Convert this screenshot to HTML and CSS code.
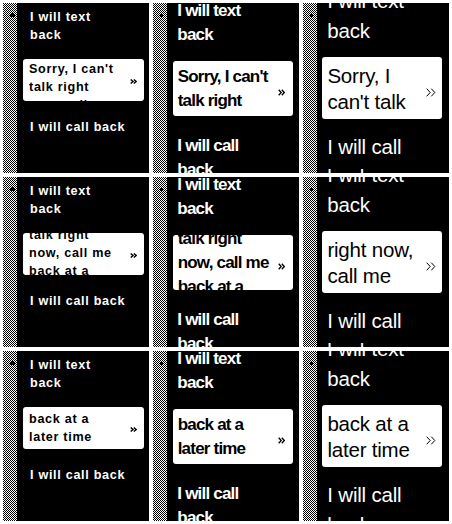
FILE: index.html
```html
<!DOCTYPE html>
<html lang="en">
<head>
<meta charset="utf-8">
<title>Canned replies</title>
<link rel="stylesheet" href="styles.css">
</head>
<body>
<svg class="defs" aria-hidden="true"><defs><pattern id="chk" width="2" height="2" patternUnits="userSpaceOnUse"><rect width="2" height="2" fill="#fff"/><rect width="1" height="1" fill="#000"/><rect x="1" y="1" width="1" height="1" fill="#000"/></pattern></defs></svg>
<div class="board">

  <section class="screen c1 r1">
    <svg class="strip" width="14" height="170" viewBox="0 0 14 170"><rect width="14" height="170" fill="url(#chk)"/><circle cx="9.5" cy="12" r="2.4" fill="#000"/></svg>
    <div class="view"><div class="list">
      <p class="item">I will text<br>back</p>
      <div class="card"><div class="card-text"><p class="lines">Sorry, I can't<br>talk right<br>now, call me<br>back at a<br>later time</p></div>
        <svg class="chev" viewBox="0 0 7 5"><path d="M0.7 0.5 L3 2.5 L0.7 4.5 M3.8 0.5 L6.1 2.5 L3.8 4.5"/></svg></div>
      <p class="item">I will call back</p>
    </div></div>
  </section>

  <section class="screen c2 r1">
    <svg class="strip" width="14" height="170" viewBox="0 0 14 170"><rect width="14" height="170" fill="url(#chk)"/><circle cx="8.5" cy="12.3" r="2.1" fill="#000"/></svg>
    <div class="view"><div class="list">
      <p class="item">I will text<br>back</p>
      <div class="card"><div class="card-text"><p class="lines">Sorry, I can't<br>talk right<br>now, call me<br>back at a<br>later time</p></div>
        <svg class="chev" viewBox="0 0 7 7"><path d="M0.7 0.7 L3.2 3.5 L0.7 6.3 M3.8 0.7 L6.3 3.5 L3.8 6.3"/></svg></div>
      <p class="item">I will call<br>back</p>
    </div></div>
  </section>

  <section class="screen c3 r1">
    <svg class="strip" width="14" height="170" viewBox="0 0 14 170"><rect width="14" height="170" fill="url(#chk)"/><circle cx="8.5" cy="12.3" r="2.1" fill="#000"/></svg>
    <div class="view"><div class="list">
      <p class="item">I will text<br>back</p>
      <div class="card"><div class="card-text"><p class="lines">Sorry, I<br>can't talk<br>right now,<br>call me<br>back at a<br>later time</p></div>
        <svg class="chev" viewBox="0 0 10 9"><path d="M0.7 0.7 L4.2 4.5 L0.7 8.3 M5.3 0.7 L8.8 4.5 L5.3 8.3"/></svg></div>
      <p class="item">I will call<br>back</p>
    </div></div>
  </section>

  <section class="screen c1 r2">
    <svg class="strip" width="14" height="170" viewBox="0 0 14 170"><rect width="14" height="170" fill="url(#chk)"/><circle cx="9.5" cy="12" r="2.4" fill="#000"/></svg>
    <div class="view"><div class="list">
      <p class="item">I will text<br>back</p>
      <div class="card"><div class="card-text"><p class="lines">Sorry, I can't<br>talk right<br>now, call me<br>back at a<br>later time</p></div>
        <svg class="chev" viewBox="0 0 7 5"><path d="M0.7 0.5 L3 2.5 L0.7 4.5 M3.8 0.5 L6.1 2.5 L3.8 4.5"/></svg></div>
      <p class="item">I will call back</p>
    </div></div>
  </section>

  <section class="screen c2 r2">
    <svg class="strip" width="14" height="170" viewBox="0 0 14 170"><rect width="14" height="170" fill="url(#chk)"/><circle cx="8.5" cy="12.3" r="2.1" fill="#000"/></svg>
    <div class="view"><div class="list">
      <p class="item">I will text<br>back</p>
      <div class="card"><div class="card-text"><p class="lines">Sorry, I can't<br>talk right<br>now, call me<br>back at a<br>later time</p></div>
        <svg class="chev" viewBox="0 0 7 7"><path d="M0.7 0.7 L3.2 3.5 L0.7 6.3 M3.8 0.7 L6.3 3.5 L3.8 6.3"/></svg></div>
      <p class="item">I will call<br>back</p>
    </div></div>
  </section>

  <section class="screen c3 r2">
    <svg class="strip" width="14" height="170" viewBox="0 0 14 170"><rect width="14" height="170" fill="url(#chk)"/><circle cx="8.5" cy="12.3" r="2.1" fill="#000"/></svg>
    <div class="view"><div class="list">
      <p class="item">I will text<br>back</p>
      <div class="card"><div class="card-text"><p class="lines">Sorry, I<br>can't talk<br>right now,<br>call me<br>back at a<br>later time</p></div>
        <svg class="chev" viewBox="0 0 10 9"><path d="M0.7 0.7 L4.2 4.5 L0.7 8.3 M5.3 0.7 L8.8 4.5 L5.3 8.3"/></svg></div>
      <p class="item">I will call<br>back</p>
    </div></div>
  </section>

  <section class="screen c1 r3">
    <svg class="strip" width="14" height="170" viewBox="0 0 14 170"><rect width="14" height="170" fill="url(#chk)"/><circle cx="9.5" cy="12" r="2.4" fill="#000"/></svg>
    <div class="view"><div class="list">
      <p class="item">I will text<br>back</p>
      <div class="card"><div class="card-text"><p class="lines">Sorry, I can't<br>talk right<br>now, call me<br>back at a<br>later time</p></div>
        <svg class="chev" viewBox="0 0 7 5"><path d="M0.7 0.5 L3 2.5 L0.7 4.5 M3.8 0.5 L6.1 2.5 L3.8 4.5"/></svg></div>
      <p class="item">I will call back</p>
    </div></div>
  </section>

  <section class="screen c2 r3">
    <svg class="strip" width="14" height="170" viewBox="0 0 14 170"><rect width="14" height="170" fill="url(#chk)"/><circle cx="8.5" cy="12.3" r="2.1" fill="#000"/></svg>
    <div class="view"><div class="list">
      <p class="item">I will text<br>back</p>
      <div class="card"><div class="card-text"><p class="lines">Sorry, I can't<br>talk right<br>now, call me<br>back at a<br>later time</p></div>
        <svg class="chev" viewBox="0 0 7 7"><path d="M0.7 0.7 L3.2 3.5 L0.7 6.3 M3.8 0.7 L6.3 3.5 L3.8 6.3"/></svg></div>
      <p class="item">I will call<br>back</p>
    </div></div>
  </section>

  <section class="screen c3 r3">
    <svg class="strip" width="14" height="170" viewBox="0 0 14 170"><rect width="14" height="170" fill="url(#chk)"/><circle cx="8.5" cy="12.3" r="2.1" fill="#000"/></svg>
    <div class="view"><div class="list">
      <p class="item">I will text<br>back</p>
      <div class="card"><div class="card-text"><p class="lines">Sorry, I<br>can't talk<br>right now,<br>call me<br>back at a<br>later time</p></div>
        <svg class="chev" viewBox="0 0 10 9"><path d="M0.7 0.7 L4.2 4.5 L0.7 8.3 M5.3 0.7 L8.8 4.5 L5.3 8.3"/></svg></div>
      <p class="item">I will call<br>back</p>
    </div></div>
  </section>

</div>
</body>
</html>
```

FILE: styles.css
```css
html, body {
  margin: 0;
  background: #fff;
}

.defs {
  position: absolute;
  width: 0;
  height: 0;
}

.board {
  display: grid;
  grid-template-columns: repeat(3, 146px);
  grid-template-rows: repeat(3, 170px);
  gap: 4px;
  padding: 3px;
  width: max-content;
  background: #fff;
}

.screen {
  display: flex;
  background: #000;
  color: #fff;
  overflow: hidden;
  font-family: "Liberation Sans", Arial, sans-serif;
}

.strip {
  flex: none;
  display: block;
  shape-rendering: crispEdges;
}

.view {
  flex: 1;
  min-width: 0;
  overflow: hidden;
}

.list {
  display: flex;
  flex-direction: column;
}

.item {
  margin: 0;
  white-space: nowrap;
}

.card {
  display: flex;
  background: #fff;
  color: #000;
  border-radius: 3px;
}

.card-text {
  flex: 1;
  min-width: 0;
  overflow: hidden;
}

.lines {
  margin: 0;
  white-space: nowrap;
}

.chev {
  flex: none;
  display: block;
  fill: none;
  stroke: #000;
}

/* column 1: small bold */
.c1 .list {
  padding-top: 5.3px;
  font-weight: 700;
  font-size: 12.6px;
  line-height: 18px;
  letter-spacing: 0.7px;
}
.c1 .item { margin-left: 13px; }
.c1 .card {
  height: 42px;
  margin: 14.7px 5px 0 6px;
}
.c1 .card-text { padding: 1px 0 0 6px; }
.c1 .card + .item { margin-top: 17.3px; }
.c1 .chev {
  width: 7px;
  height: 5px;
  margin: 20px 7px 0 0;
  stroke-width: 1.4;
}
.c1.r2 .lines { margin-top: -26px; }
.c1.r3 .lines { margin-top: -52px; }

/* column 2: medium bold */
.c2 .list {
  margin-top: -3.6px;
  font-weight: 700;
  font-size: 17px;
  line-height: 24px;
  letter-spacing: -0.8px;
}
.c2 .item { margin-left: 10.3px; }
.c2 .card {
  height: 55px;
  margin: 13.6px 5.7px 0 5.7px;
}
.c2 .card-text { padding: 4px 0 0 5px; }
.c2 .card + .item { margin-top: 17.8px; }
.c2 .chev {
  width: 7px;
  height: 7px;
  margin: 28px 8px 0 0;
  stroke-width: 1.3;
}
.c2.r2 .lines { margin-top: -36px; }
.c2.r3 .lines { margin-top: -72px; }

/* column 3: large regular */
.c3 .list {
  margin-top: -16.8px;
  font-weight: 400;
  font-size: 20.5px;
  line-height: 30px;
  letter-spacing: -0.2px;
}
.c3 .item { margin-left: 10.3px; }
.c3 .card {
  height: 62px;
  margin: 10.5px 7.3px 0 4.7px;
}
.c3 .card-text { padding: 6px 0 0 5.7px; }
.c3 .lines { line-height: 26.7px; }
.c3 .card + .item { margin-top: 13.6px; }
.c3 .chev {
  width: 10px;
  height: 9px;
  margin: 31px 5.7px 0 0;
  stroke-width: 1;
}
.c3.r2 .lines { margin-top: -53.4px; }
.c3.r3 .lines { margin-top: -106.8px; }
```
